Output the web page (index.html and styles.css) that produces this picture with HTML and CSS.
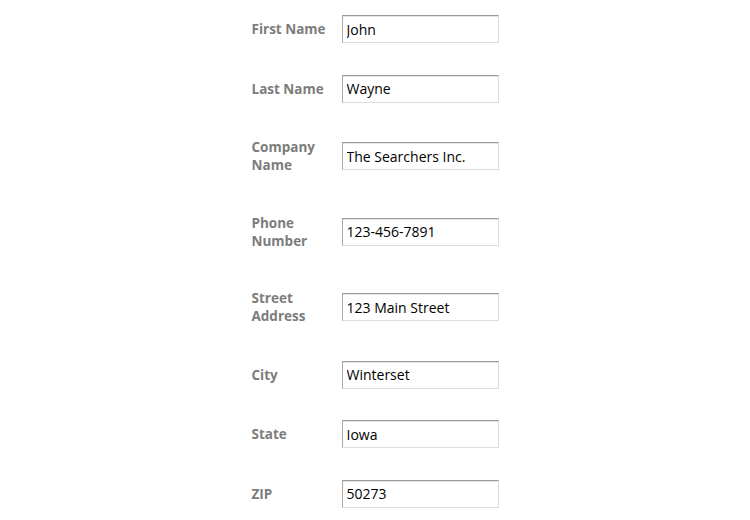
FILE: index.html
```html
<!DOCTYPE html>
<html lang="en">
<head>
    <meta charset="UTF-8">
    <title>Contact Details</title>
    <link rel="stylesheet" href="styles.css">
</head>
<body>
    <form class="contact-form">
        <table class="form-table">
            <tr>
                <td class="label">First Name</td>
                <td><input type="text" value="John"></td>
            </tr>
            <tr>
                <td class="label">Last Name</td>
                <td><input type="text" value="Wayne"></td>
            </tr>
            <tr>
                <td class="label">Company Name</td>
                <td><input type="text" value="The Searchers Inc."></td>
            </tr>
            <tr>
                <td class="label">Phone Number</td>
                <td><input type="text" value="123-456-7891"></td>
            </tr>
            <tr>
                <td class="label">Street Address</td>
                <td><input type="text" value="123 Main Street"></td>
            </tr>
            <tr>
                <td class="label">City</td>
                <td><input type="text" value="Winterset"></td>
            </tr>
            <tr>
                <td class="label">State</td>
                <td><input type="text" value="Iowa"></td>
            </tr>
            <tr>
                <td class="label">ZIP</td>
                <td><input type="text" value="50273"></td>
            </tr>
        </table>
    </form>
</body>
</html>
```

FILE: styles.css
```css
* {
    margin: 0;
    padding: 0;
    box-sizing: border-box;
}

body {
    font-family: 'Open Sans', 'Liberation Sans', sans-serif;
    background: #fff;
    color: #000;
}

.contact-form {
    display: flex;
    justify-content: center;
}

.form-table {
    border-collapse: collapse;
}

.form-table td {
    vertical-align: middle;
    padding: 15.75px 0;
}

.form-table tr:first-child td {
    padding-top: 15px;
}

.form-table td.label {
    width: 90px;
    padding: 19.75px 12px 19.75px 0;
    font-size: 13.5px;
    font-weight: bold;
    line-height: 18px;
    color: #7c7c7c;
}

.form-table tr:first-child td.label {
    padding-top: 19px;
}

input[type="text"] {
    width: 157px;
    height: 28px;
    padding: 0 4px;
    font-family: 'Open Sans', 'Liberation Sans', sans-serif;
    font-size: 14px;
    color: #000;
    background: #fff;
    border: 1px solid #dcdcdc;
    border-top-color: #9a9a9a;
    border-left-color: #a8a8a8;
    box-shadow: inset 0 1px 0 #e4e4e4;
    outline: none;
}
```
